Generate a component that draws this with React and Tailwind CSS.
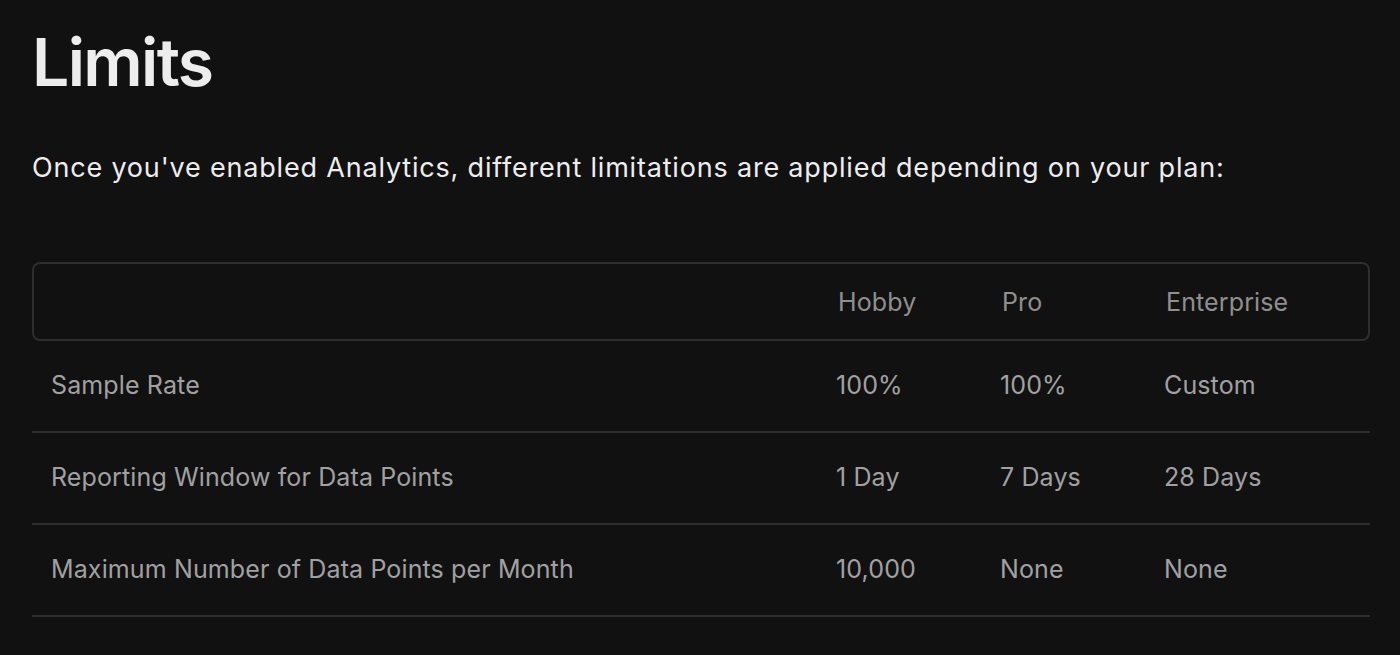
import React from 'react'

const plans = ['Hobby', 'Pro', 'Enterprise']

const rows = [
    { label: 'Sample Rate', values: ['100%', '100%', 'Custom'] },
    { label: 'Reporting Window for Data Points', values: ['1 Day', '7 Days', '28 Days'] },
    { label: 'Maximum Number of Data Points per Month', values: ['10,000', 'None', 'None'] },
]

export default function App() {
    return (
        <div className="min-h-[655px] bg-[#111111] px-8 pt-[22px] font-['Inter',sans-serif] antialiased">
            <h1 className="text-[66px] font-semibold leading-[80px] tracking-[-0.025em] text-[#ededed]">Limits</h1>

            <p className="mt-[46px] text-[27px] leading-[40px] tracking-[0.03em] text-[#ededed]">
                Once you've enabled Analytics, different limitations are applied depending on your plan:
            </p>

            {/* Plan limits table */}
            <div className="mt-[74px] w-[1338px] text-[25px] tracking-[0.005em] text-[#a1a1a1]">
                <div className="flex h-[79px] items-center rounded-lg border-2 border-[#2e2e2e] pt-[2px] text-[#8f8f8f]">
                    <div className="w-[785px]" />
                    {plans.map((plan, i) => (
                        <div key={plan} className={`${i === 2 ? 'flex-1' : 'w-[164px]'} pl-[19px]`}>
                            {plan}
                        </div>
                    ))}
                </div>

                {rows.map((row) => (
                    <div key={row.label} className="flex h-[92px] items-center border-b-2 border-[#2e2e2e]">
                        <div className="w-[785px] pl-[19px]">{row.label}</div>
                        {row.values.map((value, i) => (
                            <div key={i} className={`${i === 2 ? 'flex-1' : 'w-[164px]'} pl-[19px]`}>
                                {value}
                            </div>
                        ))}
                    </div>
                ))}
            </div>
        </div>
    )
}
